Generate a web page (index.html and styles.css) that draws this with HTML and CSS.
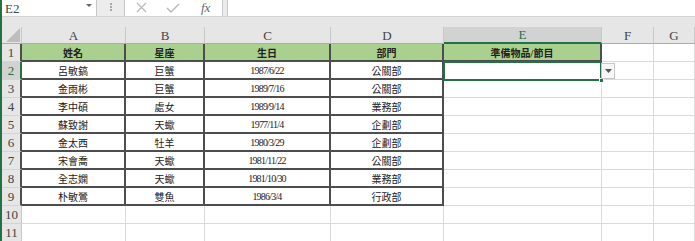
FILE: index.html
```html
<!DOCTYPE html>
<html lang="zh-Hant">
<head>
<meta charset="utf-8">
<link rel="stylesheet" href="styles.css">
</head>
<body>
<div class="app">
  <div class="fbar">
    <div class="namebox"><span class="nb-text">E2</span><span class="nb-arrow"></span></div>
    <div class="grip"><i></i><i></i><i></i></div>
    <div class="fxbox">
      <svg class="ic-x" width="11" height="11" viewBox="0 0 11 11"><path d="M1 1 L10 10 M10 1 L1 10" stroke="#b8b8b8" stroke-width="1.2" fill="none"/></svg>
      <svg class="ic-ok" width="14" height="10" viewBox="0 0 14 10"><path d="M1 5 L5 9 L13 1" stroke="#b8b8b8" stroke-width="1.4" fill="none"/></svg>
      <span class="fx">fx</span>
    </div>
    <div class="finput"></div>
  </div>
  <div class="band"></div>
  <div class="sheet">
    <div class="corner"><svg width="14" height="14" viewBox="0 0 14 14"><path d="M14 0 L14 14 L0 14 Z" fill="#bdbdbd"/></svg></div>
    <div class="ch">A</div><div class="ch">B</div><div class="ch">C</div><div class="ch">D</div><div class="ch sel">E</div><div class="ch">F</div><div class="ch">G</div>

    <div class="rh tb">1</div>
    <div class="c t h">姓名</div><div class="c t h">星座</div><div class="c t h">生日</div><div class="c t h">部門</div><div class="c t h">準備物品/節目</div><div class="c"></div><div class="c"></div>

    <div class="rh sel">2</div>
    <div class="c t">呂敏鎬</div><div class="c t">巨蟹</div><div class="c t num">1987/6/22</div><div class="c t">公關部</div>
    <div class="c selbox">
      <span class="handle"></span>
      <span class="ddbtn"><svg width="7" height="4" viewBox="0 0 7 4"><path d="M0 0 L7 0 L3.5 4 Z" fill="#555"/></svg></span>
    </div>
    <div class="c"></div><div class="c"></div>

    <div class="rh tb">3</div>
    <div class="c t">金雨彬</div><div class="c t">巨蟹</div><div class="c t num">1989/7/16</div><div class="c t">公關部</div><div class="c"></div><div class="c"></div><div class="c"></div>

    <div class="rh tb">4</div>
    <div class="c t">李中碩</div><div class="c t">處女</div><div class="c t num">1989/9/14</div><div class="c t">業務部</div><div class="c"></div><div class="c"></div><div class="c"></div>

    <div class="rh tb">5</div>
    <div class="c t">蘇致謝</div><div class="c t">天蠍</div><div class="c t num">1977/11/4</div><div class="c t">企劃部</div><div class="c"></div><div class="c"></div><div class="c"></div>

    <div class="rh tb">6</div>
    <div class="c t">金太西</div><div class="c t">牡羊</div><div class="c t num">1980/3/29</div><div class="c t">企劃部</div><div class="c"></div><div class="c"></div><div class="c"></div>

    <div class="rh tb">7</div>
    <div class="c t">宋會喬</div><div class="c t">天蠍</div><div class="c t num">1981/11/22</div><div class="c t">公關部</div><div class="c"></div><div class="c"></div><div class="c"></div>

    <div class="rh tb">8</div>
    <div class="c t">全志嫻</div><div class="c t">天蠍</div><div class="c t num">1981/10/30</div><div class="c t">業務部</div><div class="c"></div><div class="c"></div><div class="c"></div>

    <div class="rh tb">9</div>
    <div class="c t">朴敏鶯</div><div class="c t">雙魚</div><div class="c t num">1986/3/4</div><div class="c t">行政部</div><div class="c"></div><div class="c"></div><div class="c"></div>

    <div class="rh">10</div>
    <div class="c"></div><div class="c"></div><div class="c"></div><div class="c"></div><div class="c"></div><div class="c"></div><div class="c"></div>

    <div class="rh">11</div>
    <div class="c"></div><div class="c"></div><div class="c"></div><div class="c"></div><div class="c"></div><div class="c"></div><div class="c"></div>
  </div>
</div>
</body>
</html>
```

FILE: styles.css
```css
* { box-sizing: border-box; }

body {
  margin: 0;
  background: #ffffff;
  font-family: "Liberation Serif", "Noto Sans CJK TC", serif;
}

.app {
  height: 241px;
  overflow: hidden;
  border-left: 2px solid #217346;
  background: #ffffff;
}

/* formula bar */
.fbar {
  display: flex;
  height: 17px;
  background: #ececec;
  border-bottom: 1px solid #d4d4d4;
}

.namebox {
  width: 95px;
  background: #ffffff;
  border-right: 1px solid #c6c6c6;
  display: flex;
  align-items: center;
  justify-content: space-between;
  padding: 0 4px 0 3px;
}

.nb-text {
  font-size: 13px;
  color: #444444;
  line-height: 1;
}

.nb-arrow {
  width: 0;
  height: 0;
  border-left: 3px solid transparent;
  border-right: 3px solid transparent;
  border-top: 3px solid #666666;
  margin-bottom: 5px;
}

.grip {
  width: 27px;
  display: flex;
  flex-direction: column;
  align-items: center;
  justify-content: center;
  gap: 1px;
  padding-bottom: 3px;
}

.grip i {
  display: block;
  width: 2px;
  height: 2px;
  background: #a8a8a8;
}

.fxbox {
  width: 99px;
  background: #ffffff;
  border-left: 1px solid #c6c6c6;
  border-right: 1px solid #c6c6c6;
  display: flex;
  align-items: center;
  padding-left: 11px;
}

.ic-x { margin-bottom: 2px; }
.ic-ok { margin-left: 19px; margin-bottom: 1px; }

.fx {
  margin-left: 21px;
  font-style: italic;
  font-size: 13px;
  color: #666666;
  line-height: 1;
  margin-bottom: 2px;
}

.finput {
  flex: 1;
  margin-left: 4px;
  background: #ffffff;
  border-left: 1px solid #c6c6c6;
}

.band {
  height: 10px;
  background: #e6e6e6;
}

/* sheet */
.sheet {
  display: grid;
  grid-template-columns: 20px 104px 79px 126px 113px 158px 52px 1fr;
  grid-template-rows: 17px repeat(11, 18px);
}

.corner {
  background: #e6e6e6;
  border-right: 1px solid #c8c8c8;
  border-bottom: 1px solid #ababab;
  display: flex;
  align-items: flex-end;
  justify-content: flex-end;
  padding: 0 1px 1px 0;
}

.ch {
  background: #e6e6e6;
  border-right: 1px solid #c8c8c8;
  border-bottom: 1px solid #ababab;
  display: flex;
  align-items: center;
  justify-content: center;
  font-size: 13px;
  color: #444444;
  padding-top: 1px;
}

.ch.sel {
  background: #d2d2d2;
  color: #217346;
  border-bottom: 2px solid #217346;
}

.rh {
  background: #e6e6e6;
  border-right: 1px solid #c8c8c8;
  border-bottom: 1px solid #d4d4d4;
  display: flex;
  align-items: center;
  justify-content: center;
  font-size: 13px;
  color: #444444;
  padding-top: 1px;
}

.rh.tb { border-right: 2px solid #4d4d4d; }

.rh.sel {
  background: #d2d2d2;
  color: #217346;
  border-right: 2px solid #217346;
}

.c {
  border-right: 1px solid #dadada;
  border-bottom: 1px solid #dadada;
  display: flex;
  align-items: center;
  justify-content: center;
  font-size: 10px;
  color: #222222;
  padding-top: 1px;
  white-space: nowrap;
}

.c.t {
  border-right: 2px solid #4d4d4d;
  border-bottom: 2px solid #4d4d4d;
}

.c.h {
  background: #a9d08e;
  font-weight: bold;
}

.c.num { letter-spacing: -0.8px; }

/* selection overlay on E2 */
.c.selbox {
  margin: -1px 0 -1px -1px;
  border: 2px solid #217346;
  position: relative;
  z-index: 2;
}

.handle {
  position: absolute;
  right: -4px;
  bottom: -4px;
  width: 5px;
  height: 5px;
  background: #217346;
  border: 1px solid #ffffff;
}

.ddbtn {
  position: absolute;
  left: calc(100% + 1px);
  top: 0;
  width: 14px;
  height: 16px;
  background: #f7f7f7;
  border: 1px solid #c6c6c6;
  display: flex;
  align-items: center;
  justify-content: center;
}
```
